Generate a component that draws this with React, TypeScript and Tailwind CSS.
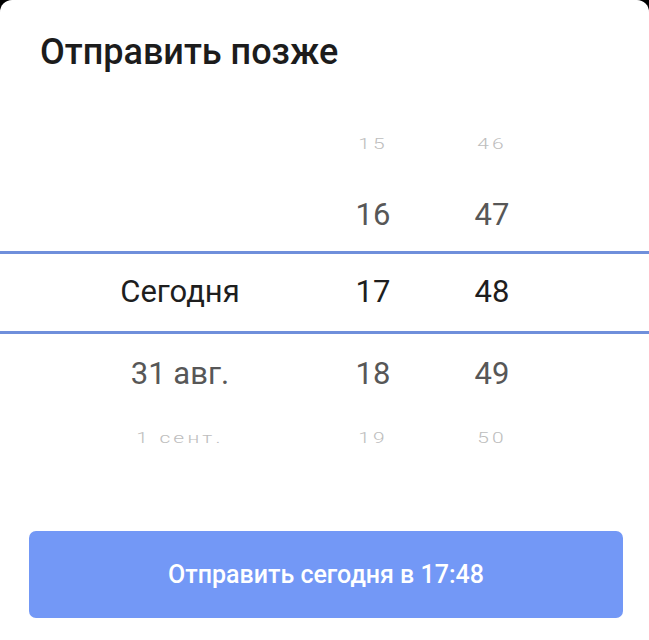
import React from "react"

type Row = { date: string; hour: string; minute: string }

const rows: Row[] = [
  { date: "", hour: "15", minute: "46" },
  { date: "", hour: "16", minute: "47" },
  { date: "Сегодня", hour: "17", minute: "48" },
  { date: "31 авг.", hour: "18", minute: "49" },
  { date: "1 сент.", hour: "19", minute: "50" },
]

function PickerRow({ row, kind }: { row: Row; kind: "far" | "near" | "selected" }) {
  if (kind === "far") {
    return (
      <div className="grid grid-cols-[300px_86px_152px] items-center h-full text-[21px] font-light tracking-[0.15em] text-[#bdbdbd] scale-y-[0.68]">
        <span className="text-center">{row.date}</span>
        <span className="text-center">{row.hour}</span>
        <span className="text-center">{row.minute}</span>
      </div>
    )
  }
  const color = kind === "selected" ? "text-[#1e1e1e]" : "text-[#575757]"
  return (
    <div className={`grid grid-cols-[300px_86px_152px] items-center h-full text-[31px] ${color}`}>
      <span className="text-center">{row.date}</span>
      <span className="text-center">{row.hour}</span>
      <span className="text-center">{row.minute}</span>
    </div>
  )
}

export default function App() {
  return (
    <div className="w-full h-[640px] bg-black" style={{ fontFamily: "Roboto, 'Noto Sans', sans-serif" }}>
      <div className="h-full bg-white rounded-t-[12px] overflow-hidden flex flex-col">
        <h1 className="pt-[30px] px-[40px] text-[36px] leading-[44px] font-medium text-[#1c1c1c]">
          Отправить позже
        </h1>

        <div className="mt-[36px] flex flex-col">
          <div className="h-[70px] pl-[30px]">
            <PickerRow row={rows[0]} kind="far" />
          </div>
          <div className="h-[71px] pl-[30px]">
            <PickerRow row={rows[1]} kind="near" />
          </div>
          <div className="h-[83px] pl-[30px] border-y-[3px] border-[#6f8fdb]">
            <PickerRow row={rows[2]} kind="selected" />
          </div>
          <div className="h-[80px] pl-[30px]">
            <PickerRow row={rows[3]} kind="near" />
          </div>
          <div className="h-[50px] pl-[30px]">
            <PickerRow row={rows[4]} kind="far" />
          </div>
        </div>

        <button className="mt-[67px] ml-[29px] w-[594px] h-[87px] rounded-[7px] bg-[#7398f6] text-white text-[25px] font-medium">
          Отправить сегодня в 17:48
        </button>
      </div>
    </div>
  )
}
